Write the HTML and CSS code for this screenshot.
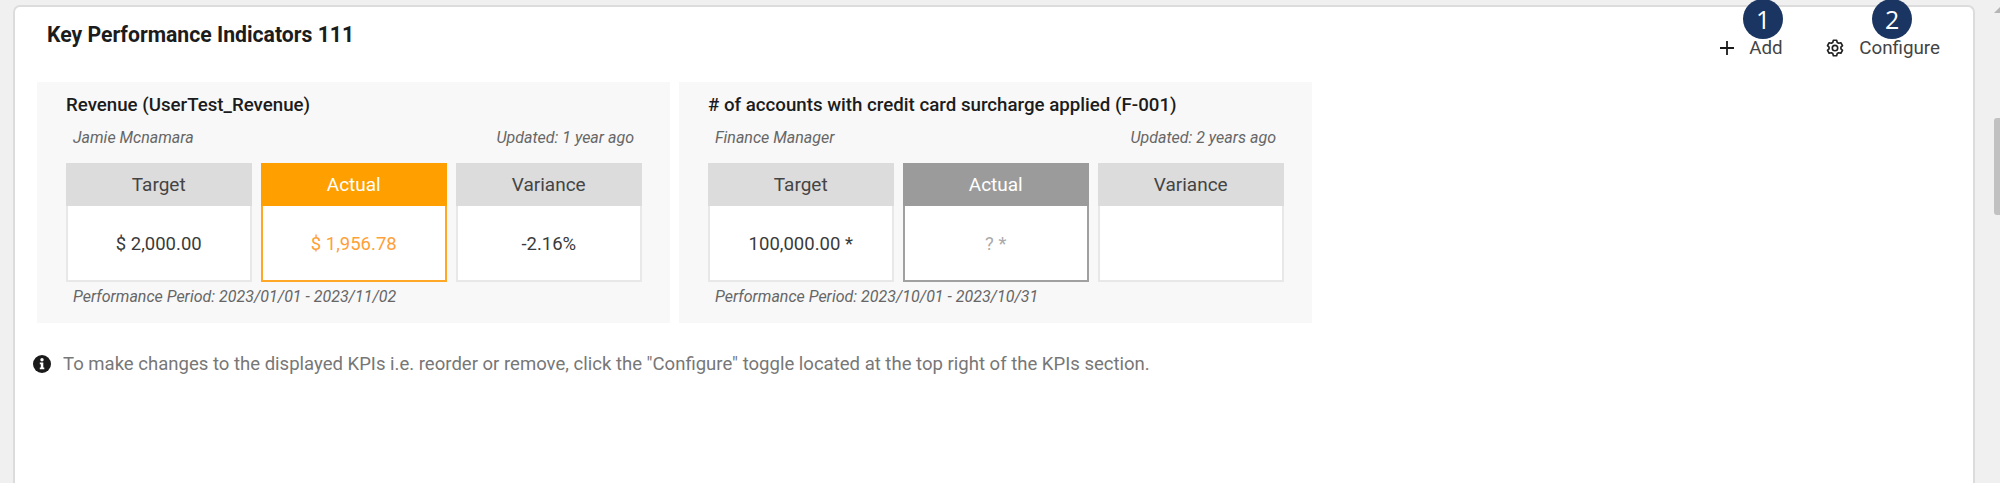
FILE: index.html
```html
<!DOCTYPE html>
<html lang="en">
<head>
    <meta charset="UTF-8">
    <title>Key Performance Indicators</title>
    <link rel="stylesheet" href="styles.css">
</head>
<body>
    <main class="panel">
        <header class="panel-head">
            <h2 class="panel-title">Key Performance Indicators 111</h2>
            <div class="actions">
                <button class="action action-add">
                    <svg class="icon-plus" viewBox="0 0 16 16" width="16" height="16"><path d="M8 1v14M1 8h14" fill="none" stroke="#1a1a1a" stroke-width="1.8"/></svg>
                    <span>Add</span>
                    <span class="badge">1</span>
                </button>
                <button class="action action-config">
                    <svg class="icon-gear" viewBox="0 0 24 24" width="18" height="18" fill="none" stroke="#222" stroke-width="2.2" stroke-linejoin="round"><path d="M9 4.58 9.82 1.73h4.36L15 4.58l1.93 1.12 2.87-.73 2.19 3.79-2.07 2.13v2.22l2.07 2.13-2.19 3.79-2.87-.73L15 19.42l-.82 2.85H9.82L9 19.42 7.07 18.3l-2.87.73-2.19-3.79 2.07-2.13v-2.22L2.01 8.76 4.2 4.97l2.87.73z"/><circle cx="12" cy="12" r="3.6"/></svg>
                    <span>Configure</span>
                    <span class="badge">2</span>
                </button>
            </div>
        </header>

        <section class="kpi-row">
            <article class="kpi">
                <h3 class="kpi-title">Revenue (UserTest_Revenue)</h3>
                <div class="kpi-meta"><span>Jamie Mcnamara</span><span>Updated: 1 year ago</span></div>
                <div class="kpi-boxes">
                    <div class="box"><div class="box-head">Target</div><div class="box-value">$ 2,000.00</div></div>
                    <div class="box box-orange"><div class="box-head">Actual</div><div class="box-value">$ 1,956.78</div></div>
                    <div class="box"><div class="box-head">Variance</div><div class="box-value">-2.16%</div></div>
                </div>
                <div class="kpi-period">Performance Period: 2023/01/01 - 2023/11/02</div>
            </article>
            <article class="kpi">
                <h3 class="kpi-title"># of accounts with credit card surcharge applied (F-001)</h3>
                <div class="kpi-meta"><span>Finance Manager</span><span>Updated: 2 years ago</span></div>
                <div class="kpi-boxes">
                    <div class="box"><div class="box-head">Target</div><div class="box-value">100,000.00 *</div></div>
                    <div class="box box-grey"><div class="box-head">Actual</div><div class="box-value">? *</div></div>
                    <div class="box"><div class="box-head">Variance</div><div class="box-value"></div></div>
                </div>
                <div class="kpi-period">Performance Period: 2023/10/01 - 2023/10/31</div>
            </article>
        </section>

        <p class="note">
            <svg class="icon-info" viewBox="0 0 18 18" width="18" height="18"><circle cx="9" cy="9" r="9" fill="#1a1a1a"/><circle cx="9" cy="4.8" r="1.7" fill="#fff"/><path d="M6.8 7.6h3.5v5h1v1.6H6.8v-1.6h1v-3.4h-1z" fill="#fff"/></svg>
            <span>To make changes to the displayed KPIs i.e. reorder or remove, click the "Configure" toggle located at the top right of the KPIs section.</span>
        </p>
    </main>
    <aside class="gutter">
        <div class="arrow-up"></div>
        <div class="thumb"></div>
    </aside>
</body>
</html>
```

FILE: styles.css
```css
* {
    box-sizing: border-box;
}
body {
    margin: 0;
    height: 483px;
    overflow: hidden;
    display: flex;
    background: #f0f0f0;
    font-family: Roboto, Arial, sans-serif;
    color: #333;
}
.panel {
    margin: 5px 0 0 13px;
    width: 1962px;
    height: 478px;
    background: #fff;
    border: 2px solid #dcdcdc;
    border-bottom: none;
    border-radius: 7px 7px 0 0;
    padding: 0 0 0 22px;
}
.panel-head {
    display: flex;
    justify-content: space-between;
    height: 75px;
}
.panel-title {
    margin: 15px 0 0 10px;
    font-size: 21.2px;
    line-height: 26px;
    font-weight: 700;
    color: #1c1c1c;
}
.actions {
    display: flex;
    margin: 29px 33px 0 0;
}
.action {
    position: relative;
    display: flex;
    align-items: center;
    height: 24px;
    padding: 0;
    border: none;
    background: none;
    font: 400 18.8px Roboto, Arial, sans-serif;
    color: #444;
}
.action-add {
    width: 108px;
    gap: 14px;
    padding-left: 1px;
}
.action-config {
    gap: 15px;
}
.badge {
    position: absolute;
    top: -37px;
    width: 40px;
    height: 40px;
    border-radius: 50%;
    background: #1a3561;
    color: #fff;
    font: 400 25px/40px "Open Sans", sans-serif;
    text-align: center;
}
.action-add .badge {
    left: 25px;
}
.action-config .badge {
    left: 46px;
}
.kpi-row {
    display: flex;
    gap: 9px;
}
.kpi {
    width: 633px;
    height: 241px;
    padding: 11px 29px 0 29px;
    background: #f8f8f8;
}
.kpi-title {
    margin: 0;
    font-size: 18.7px;
    line-height: 24px;
    font-weight: 500;
    color: #1c1c1c;
}
.kpi-meta {
    display: flex;
    justify-content: space-between;
    margin-top: 11px;
    padding: 0 7px;
    font-size: 16px;
    line-height: 20px;
    font-style: italic;
    color: #666;
}
.kpi-boxes {
    display: grid;
    grid-template-columns: repeat(3, 185.5px);
    gap: 9.5px;
    margin-top: 15px;
}
.box {
    height: 119px;
    border: 2px solid #e8e8e8;
    background: #fff;
    text-align: center;
}
.box-head {
    margin: -2px -2px 0;
    height: 43px;
    background: #dcdcdc;
    font-size: 19px;
    line-height: 43px;
    color: #444;
}
.box-value {
    font-size: 18.5px;
    line-height: 76px;
    color: #3a3a3a;
}
.box-orange {
    border-color: #ffa726;
}
.box-orange .box-head {
    background: #ff9f00;
    color: #fff;
}
.box-orange .box-value {
    color: #ff9f3a;
}
.box-grey {
    border-color: #a0a0a0;
}
.box-grey .box-head {
    background: #9b9b9b;
    color: #fff;
}
.box-grey .box-value {
    color: #aaa;
}
.kpi-period {
    margin-top: 5px;
    padding-left: 7px;
    font-size: 16px;
    line-height: 20px;
    font-style: italic;
    color: #666;
}
.note {
    display: flex;
    align-items: center;
    gap: 12px;
    margin: 30px 0 0 -4px;
    font-size: 18.55px;
    line-height: 22px;
    color: #777;
}
.gutter {
    flex: 1;
    display: flex;
    flex-direction: column;
    align-items: flex-end;
}
.arrow-up {
    margin: 7px 0 0;
    width: 0;
    height: 0;
    border-left: 6px solid transparent;
    border-bottom: 6px solid #b5b5b5;
}
.thumb {
    margin-top: 105px;
    width: 6px;
    height: 97px;
    border-radius: 3px 0 0 3px;
    background: #c1c1c1;
}
```
